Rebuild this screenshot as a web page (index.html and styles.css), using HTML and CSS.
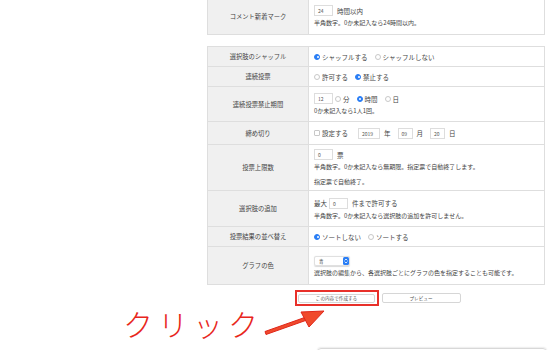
FILE: index.html
```html
<!DOCTYPE html>
<html lang="ja">
<head>
<meta charset="utf-8">
<link rel="stylesheet" href="styles.css">
</head>
<body>
<div class="page">
  <div class="col">
    <table class="tbl top">
      <tr class="h-comment">
        <th>コメント新着マーク</th>
        <td>
          <div class="line"><span class="num">24</span><span class="t">時間以内</span></div>
          <div class="desc">半角数字。0か未記入なら24時間以内。</div>
        </td>
      </tr>
    </table>

    <table class="tbl main">
      <tr class="h20">
        <th>選択肢のシャッフル</th>
        <td><div class="line"><span class="radio on"></span><span class="t">シャッフルする</span><span class="radio"></span><span class="t">シャッフルしない</span></div></td>
      </tr>
      <tr class="h20">
        <th>連続投票</th>
        <td><div class="line"><span class="radio"></span><span class="t">許可する</span><span class="radio on"></span><span class="t">禁止する</span></div></td>
      </tr>
      <tr class="h35">
        <th>連続投票禁止期間</th>
        <td>
          <div class="line"><span class="num">12</span><span class="radio"></span><span class="t">分</span><span class="radio on"></span><span class="t">時間</span><span class="radio"></span><span class="t">日</span></div>
          <div class="desc">0か未記入なら1人1回。</div>
        </td>
      </tr>
      <tr class="h23">
        <th>締め切り</th>
        <td><div class="line"><span class="check"></span><span class="t">設定する</span><span class="num wide">2019</span><span class="t">年</span><span class="num small">09</span><span class="t">月</span><span class="num small">20</span><span class="t">日</span></div></td>
      </tr>
      <tr class="h46">
        <th>投票上限数</th>
        <td>
          <div class="line"><span class="num">0</span><span class="t">票</span></div>
          <div class="desc">半角数字。0か未記入なら無期限。指定票で自動終了します。</div>
          <div class="desc gap">指定票で自動終了。</div>
        </td>
      </tr>
      <tr class="h36">
        <th>選択肢の追加</th>
        <td>
          <div class="line"><span class="t first">最大</span><span class="num">0</span><span class="t">件まで許可する</span></div>
          <div class="desc">半角数字。0か未記入なら選択肢の追加を許可しません。</div>
        </td>
      </tr>
      <tr class="h20">
        <th>投票結果の並べ替え</th>
        <td><div class="line"><span class="radio on"></span><span class="t">ソートしない</span><span class="radio"></span><span class="t">ソートする</span></div></td>
      </tr>
      <tr class="h38">
        <th>グラフの色</th>
        <td>
          <div class="line"><span class="select"><span class="sel-text">青</span><span class="sel-btn"><svg width="4" height="6" viewBox="0 0 4 6"><path d="M0.6 2.4 L2 1 L3.4 2.4 M0.6 3.6 L2 5 L3.4 3.6" fill="none" stroke="#fff" stroke-width="0.8"/></svg></span></span></div>
          <div class="desc">選択肢の編集から、各選択肢ごとにグラフの色を指定することも可能です。</div>
        </td>
      </tr>
    </table>

    <div class="actions">
      <div class="highlight"><button class="btn">この内容で作成する</button></div>
      <button class="btn preview">プレビュー</button>
    </div>

    <div class="next-box"></div>
  </div>

  <div class="annot">クリック</div>
  <svg class="arrow" width="550" height="350" viewBox="0 0 550 350">
    <polygon points="265,331.5 306,317 307,320 266,334.5" fill="#f04a2c" stroke="#e0261a" stroke-width="1"/>
    <polygon points="301,312 324,311 309,327" fill="#f04a2c" stroke="#e0261a" stroke-width="1" stroke-linejoin="round"/>
  </svg>
</div>
</body>
</html>
```

FILE: styles.css
```css
* { box-sizing: border-box; }

html, body {
  margin: 0;
  padding: 0;
  background: #fff;
}

body {
  font-family: "Noto Sans CJK JP", "Noto Sans", sans-serif;
  color: #444;
  width: 550px;
  height: 350px;
  overflow: hidden;
}

.page {
  position: relative;
  width: 550px;
  height: 350px;
}

.col {
  margin-left: 207px;
  width: 338px;
  display: flex;
  flex-direction: column;
}

.tbl {
  width: 338px;
  border-collapse: collapse;
  border: 1px solid #dedede;
  table-layout: fixed;
}

.tbl.top {
  margin-top: -3px;
}

.tbl.main {
  margin-top: 11px;
}

.tbl th {
  width: 101px;
  background: #f0f0f0;
  font-weight: normal;
  font-size: 6.3px;
  color: #444;
  text-align: center;
  border: 1px solid #dedede;
  padding: 0;
}

.tbl td {
  border: 1px solid #dedede;
  padding: 0 5px;
  vertical-align: middle;
}

.h-comment { height: 37px; }
.h20 { height: 20px; }
.h23 { height: 23px; }
.h35 { height: 35px; }
.h36 { height: 36px; }
.h38 { height: 38px; }
.h46 { height: 46px; }

.line {
  display: flex;
  align-items: center;
  height: 11px;
  font-size: 6.5px;
  color: #444;
}

.t {
  margin-left: 2px;
  margin-right: 7px;
  white-space: nowrap;
}

.t.first {
  margin-left: 0;
  margin-right: 2px;
}

.num {
  display: inline-flex;
  align-items: center;
  width: 19px;
  height: 11px;
  border: 1px solid #ddd;
  font-size: 5px;
  padding-left: 3px;
  color: #555;
  margin-right: 2px;
}

.num.wide {
  width: 22px;
  margin-left: 3px;
}

.num.small {
  width: 15px;
}

.desc {
  font-size: 6px;
  line-height: 8px;
  margin-top: 3px;
  white-space: nowrap;
  color: #444;
}

.desc.gap {
  margin-top: 7px;
}

.radio {
  display: inline-block;
  position: relative;
  width: 6px;
  height: 6px;
  border-radius: 50%;
  border: 0.6px solid #c8c8c8;
  background: #fff;
  flex: none;
}

.radio.on {
  background: #2a7ef5;
  border-color: #2a7ef5;
}

.radio.on::after {
  content: "";
  position: absolute;
  left: 1.5px;
  top: 1.5px;
  width: 2px;
  height: 2px;
  border-radius: 50%;
  background: #fff;
}

.check {
  display: inline-block;
  width: 6px;
  height: 6px;
  border: 0.6px solid #c8c8c8;
  border-radius: 1px;
  flex: none;
}

.select {
  display: inline-flex;
  align-items: center;
  justify-content: space-between;
  width: 36px;
  height: 10px;
  border: 1px solid #e0e0e0;
  border-radius: 2px;
  box-shadow: 0 0.5px 1px rgba(0,0,0,0.15);
  font-size: 4.5px;
  padding-left: 4px;
  margin-top: 1px;
}

.sel-btn {
  display: inline-flex;
  align-items: center;
  justify-content: center;
  width: 6px;
  height: 8px;
  background: #2a7ef5;
  border-radius: 1.5px;
}

.sel-btn svg { display: block; }

.actions {
  display: flex;
  justify-content: center;
  align-items: center;
  gap: 3px;
  margin-top: 5px;
  padding-left: 3px;
}

.highlight {
  border: 2.5px solid #e8302a;
  padding: 1.5px 1.5px;
  display: flex;
}

.btn {
  width: 77px;
  height: 9px;
  border: 1px solid #d6d6d6;
  border-radius: 2px;
  background: #fff;
  font-family: "Noto Sans CJK JP", sans-serif;
  font-size: 4.6px;
  color: #555;
  padding: 0;
  line-height: 7px;
}

.btn.preview {
  width: 79px;
  height: 9.5px;
}

.next-box {
  margin-top: 42px;
  margin-left: 110px;
  width: 230px;
  height: 20px;
  border: 1px solid #d8d8d8;
  border-radius: 4px;
  box-shadow: 0 -0.5px 1.5px rgba(0,0,0,0.08);
}

.annot {
  position: absolute;
  left: 123px;
  top: 308px;
  font-size: 30px;
  line-height: 30px;
  letter-spacing: 5px;
  color: #e8261c;
  font-weight: 300;
  white-space: nowrap;
}

.arrow {
  position: absolute;
  left: 0;
  top: 0;
  pointer-events: none;
}
```
